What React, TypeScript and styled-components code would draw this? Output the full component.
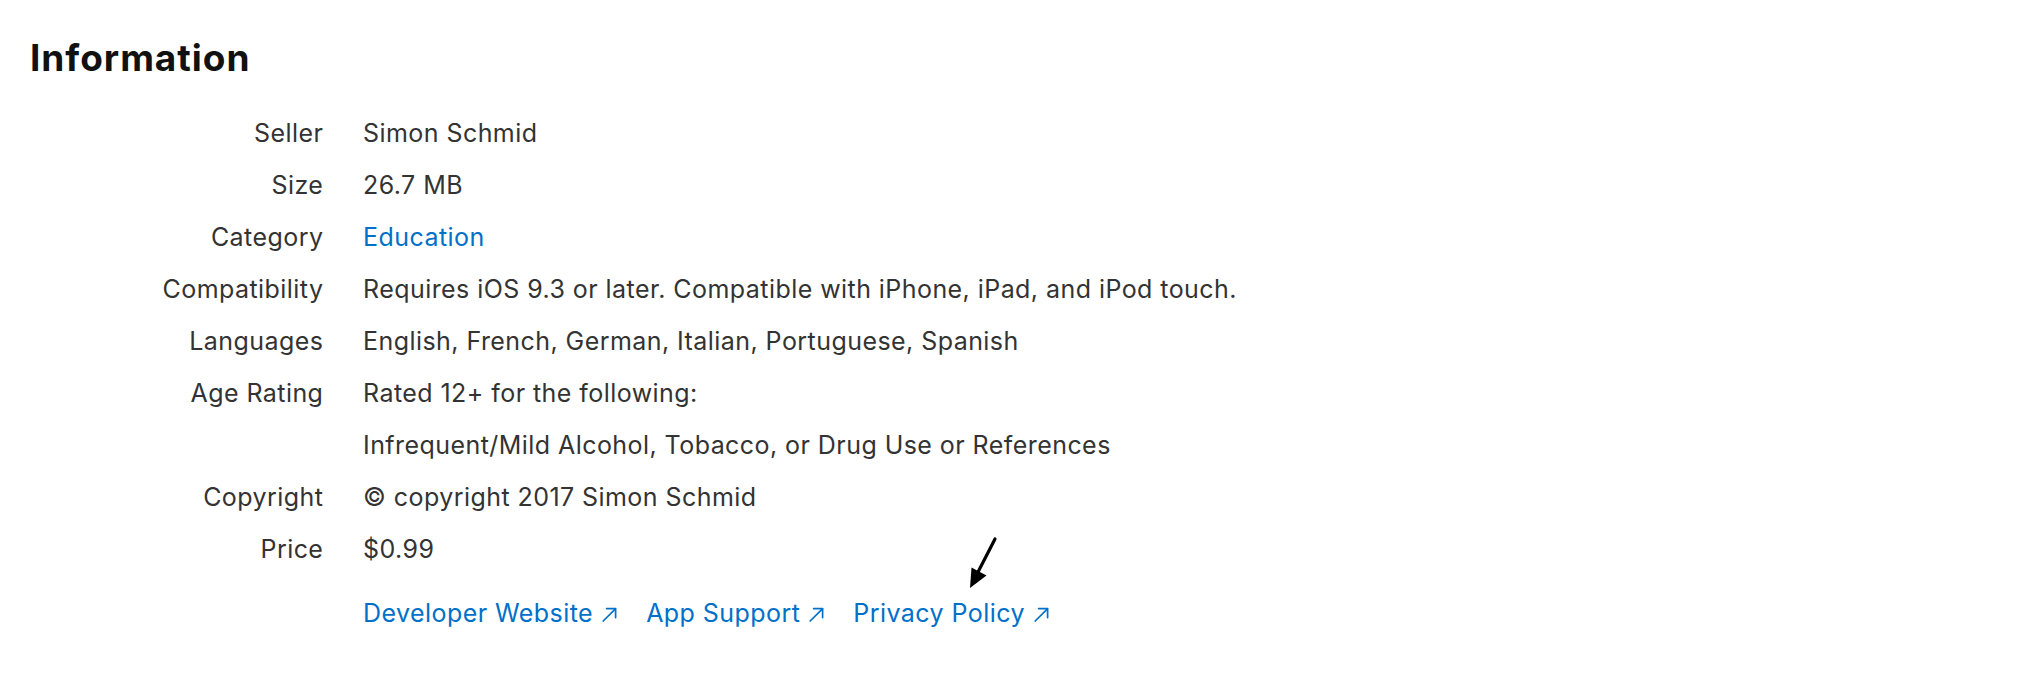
import React from "react";
import styled, { createGlobalStyle } from "styled-components";

const GlobalStyle = createGlobalStyle`
  html, body { margin: 0; padding: 0; background: #ffffff; }
  body { font-family: Inter, "Noto Sans", "Liberation Sans", sans-serif; -webkit-font-smoothing: antialiased; }
`;

const Page = styled.section`
  position: relative;
  width: 2020px;
  height: 690px;
  box-sizing: border-box;
  padding: 36px 0 0 30px;
  background: #fff;
`;

const Title = styled.h2`
  margin: 0;
  font-size: 37px;
  line-height: 44px;
  font-weight: 700;
  color: #111111;
  letter-spacing: 0.95px;
`;

const InfoList = styled.dl`
  margin: 27px 0 0 0;
  display: grid;
  grid-template-columns: 293px auto;
  column-gap: 40px;
  justify-content: start;
  font-size: 25px;
  line-height: 52px;
  letter-spacing: 0.44px;
  color: #333333;
`;

const Term = styled.dt`
  margin: 0;
  text-align: right;
  white-space: nowrap;
  margin-right: -0.4px;
`;

const Desc = styled.dd`
  margin: 0;
  white-space: nowrap;
`;

const Link = styled.a`
  color: #0070c9;
  text-decoration: none;
  display: inline-flex;
  align-items: baseline;
`;

const LinkRow = styled.div`
  grid-column: 2;
  display: flex;
  gap: 29px;
  margin-top: 12px;
  line-height: 52px;
`;

const ExtIcon = styled.svg`
  width: 15px;
  height: 15px;
  margin-left: 9px;
  flex-shrink: 0;
`;

const Annotation = styled.svg`
  position: absolute;
  left: 0;
  top: 0;
  pointer-events: none;
`;

const External = () => (
  <ExtIcon viewBox="0 0 15 15" fill="none" stroke="#0070c9" strokeWidth={1.7} strokeLinecap="round" strokeLinejoin="round">
    <path d="M1.2 14 L13.4 1.8" />
    <path d="M4.6 1.6 H13.6 V10.6" />
  </ExtIcon>
);

const rows: { term: string; values: React.ReactNode[] }[] = [
  { term: "Seller", values: ["Simon Schmid"] },
  { term: "Size", values: ["26.7 MB"] },
  { term: "Category", values: [<Link key="c" href="#">Education</Link>] },
  { term: "Compatibility", values: ["Requires iOS 9.3 or later. Compatible with iPhone, iPad, and iPod touch."] },
  { term: "Languages", values: ["English, French, German, Italian, Portuguese, Spanish"] },
  {
    term: "Age Rating",
    values: ["Rated 12+ for the following:", "Infrequent/Mild Alcohol, Tobacco, or Drug Use or References"],
  },
  { term: "Copyright", values: ["© copyright 2017 Simon Schmid"] },
  { term: "Price", values: ["$0.99"] },
];

export default function App() {
  return (
    <>
      <GlobalStyle />
      <Page>
        <Title>Information</Title>
        <InfoList>
          {rows.map((r) => (
            <React.Fragment key={r.term}>
              <Term>{r.term}</Term>
              <Desc>
                {r.values.map((v, i) => (
                  <div key={i}>{v}</div>
                ))}
              </Desc>
            </React.Fragment>
          ))}
          <LinkRow>
            <Link href="#">Developer Website<External /></Link>
            <Link href="#">App Support<External /></Link>
            <Link href="#">Privacy Policy<External /></Link>
          </LinkRow>
        </InfoList>
        <Annotation width="2020" height="690" viewBox="0 0 2020 690">
          <line x1="995" y1="539" x2="977" y2="574" stroke="#000" strokeWidth="3.2" strokeLinecap="round" />
          <polygon points="970,588 986.5,575.5 971.5,567.5" fill="#000" />
        </Annotation>
      </Page>
    </>
  );
}
